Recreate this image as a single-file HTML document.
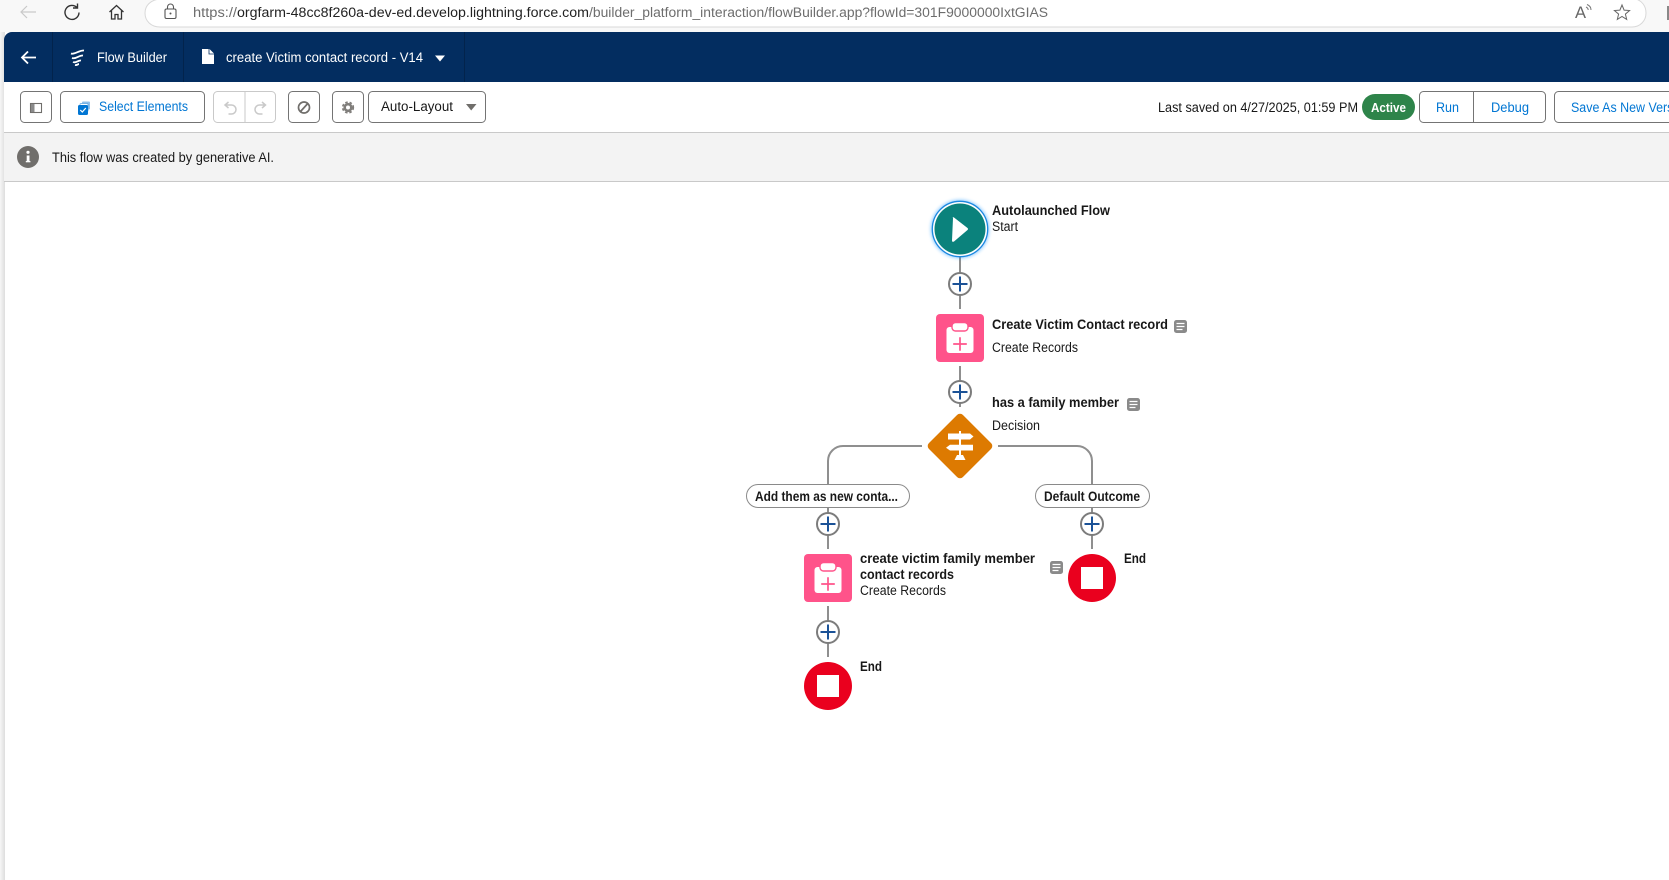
<!DOCTYPE html>
<html lang="en"><head><meta charset="utf-8"><title>Flow Builder</title>
<style>
html,body{margin:0;padding:0;width:1669px;height:880px;overflow:hidden;background:#fff}
svg{display:block}
text{font-family:"Liberation Sans",Arial,sans-serif;font-size:13.5px;fill:#181818}
.b{font-weight:700}
.w{fill:#fff}
.l{fill:#0176d3}
.btn{fill:#fff;stroke:#747474;stroke-width:1}
.c{stroke:#8f8f8f;stroke-width:2;fill:none}
</style></head><body>
<svg width="1669" height="880" viewBox="0 0 1669 880" xmlns="http://www.w3.org/2000/svg">
<defs>
<filter id="gl" x="-30%" y="-30%" width="160%" height="160%"><feGaussianBlur stdDeviation="1.800"/></filter>
<linearGradient id="st" x1="0" x2="1" y1="0" y2="0"><stop offset="0" stop-color="#f6f6f6"/><stop offset="1" stop-color="#dedede"/></linearGradient>
<g id="plus"><circle r="11" fill="#fff" stroke="#7c7c7c" stroke-width="2"/><path d="M-7.500 0H7.500M0-7.500V7.500" stroke="#1b5297" stroke-width="2" fill="none"/></g>
<g id="note"><rect width="13" height="13" rx="2.500" fill="#8a8a8a"/><path d="M2.500 3.500H10.500M2.500 6.500H10.500M2.500 9.500H8.500" stroke="#fff" stroke-width="1.300"/></g>
<g id="rec"><rect x="-24" y="-24" width="48" height="48" rx="4" fill="#ff538a"/>
<rect x="-13.500" y="-11" width="27" height="26" rx="3" fill="#fff"/>
<rect x="-8" y="-15.500" width="16" height="8.500" rx="3.500" fill="#fff" stroke="#ff538a" stroke-width="1.400"/>
<path d="M-6.800 6H6.800M0-0.800V12.800" stroke="#ff538a" stroke-width="1.700" fill="none"/></g>
<g id="end"><circle r="24" fill="#ea001e"/><rect x="-11" y="-11" width="22" height="22" fill="#fff"/></g>
</defs>

<!-- browser chrome -->
<rect width="1669" height="32" fill="#f8f8f8"/>
<path d="M160 -1C150 0 145 6 145 13C145 21 151 27 160 27H1632C1640 27 1646 21 1646 13C1646 6 1642 1 1636 -1Z" fill="#fff" stroke="#d8d8d8" stroke-width="1"/>
<path d="M36 12H21M27 6L21 12L27 18" fill="none" stroke="#c9c9c9" stroke-width="1.200"/>
<path d="M77 7.500A7 7 0 1 0 79 12.500M77.500 3.500V8H73" fill="none" stroke="#333" stroke-width="1.400"/>
<path d="M109.500 12L116.500 5.500L123.500 12M111.500 10.500V19H115V14.500H118V19H121.500V10.500" fill="none" stroke="#333" stroke-width="1.300"/>
<rect x="165" y="9" width="11" height="9.500" rx="1.500" fill="none" stroke="#555" stroke-width="1.100"/>
<path d="M167.500 9V7A3 3 0 0 1 173.500 7V9" fill="none" stroke="#555" stroke-width="1.100"/><circle cx="170.500" cy="13.500" r="1" fill="#555"/>
<text x="193" y="17" style="font-size:13.500px;fill:#6d6d6d" textLength="44" lengthAdjust="spacingAndGlyphs">https://</text>
<text x="237" y="17" style="font-size:13.500px;fill:#222" textLength="352" lengthAdjust="spacingAndGlyphs">orgfarm-48cc8f260a-dev-ed.develop.lightning.force.com</text>
<text x="589" y="17" style="font-size:13.500px;fill:#6d6d6d" textLength="459" lengthAdjust="spacingAndGlyphs">/builder_platform_interaction/flowBuilder.app?flowId=301F9000000IxtGIAS</text>
<text x="1575" y="18" style="font-size:16.500px;fill:#666">A</text>
<path d="M1587 4.500C1589.500 5.500 1591 7.500 1591 10M1586 7C1587.500 7.700 1588.200 8.700 1588.200 10" fill="none" stroke="#777" stroke-width="1"/>
<path d="M1622 5L1624.100 10.100L1629.600 10.500L1625.400 14.100L1626.700 19.400L1622 16.500L1617.300 19.400L1618.600 14.100L1614.400 10.500L1619.900 10.100Z" fill="none" stroke="#666" stroke-width="1"/>
<rect x="1667" y="6" width="2" height="14" fill="#888"/>

<!-- left strip -->
<rect y="32" width="5" height="848" fill="url(#st)"/>

<!-- nav -->
<path d="M4 82V40A8 8 0 0 1 12 32H1669V82Z" fill="#032d60"/>
<path d="M52.500 32V82M183.500 32V82M464.500 32V82" stroke="#02234c" stroke-width="1"/>
<path d="M36 57.500H22M28 51.500L22 57.500L28 63.500" fill="none" stroke="#fff" stroke-width="1.800"/>
<path d="M71 53.500C75 55 79 50 84 50.500M72 58C76 59.500 79 55 83 55.500M73 62C76 63.500 78 60 81 60.500M75 65C77 65.500 78 64 79 64" fill="none" stroke="#fff" stroke-width="1.800"/>
<text class="w" x="97" y="62" textLength="70" lengthAdjust="spacingAndGlyphs">Flow Builder</text>
<path d="M202 49H209.500L214 53.500V64H202Z" fill="#fff"/><path d="M209 49V54H214" fill="none" stroke="#032d60" stroke-width=".8"/>
<text class="w" x="226" y="62" textLength="197" lengthAdjust="spacingAndGlyphs">create Victim contact record - V14</text>
<path d="M435 55.500H445L440 61.500Z" fill="#fff"/>

<!-- toolbar -->
<rect x="4" y="82" width="1665" height="50" fill="#fff"/>
<rect x="4" y="132" width="1665" height="1" fill="#c9c9c9"/>
<rect x="20.500" y="91.500" width="31" height="31" rx="4" class="btn"/>
<rect x="30.500" y="103.500" width="11" height="9" fill="#fff" stroke="#706e6b" stroke-width="1.100"/><rect x="31" y="104" width="3.500" height="8" fill="#8a8a8a"/>
<rect x="60.500" y="91.500" width="144" height="31" rx="4" class="btn"/>
<rect x="82" y="101.500" width="8" height="8" rx="1" fill="#90c0ea"/><rect x="80" y="103.500" width="8" height="8" rx="1" fill="#fff" stroke="#5aa3e0" stroke-width=".7"/>
<rect x="78" y="105" width="10" height="10" rx="1.500" fill="#0176d3"/><path d="M80.300 110L82.300 112L85.800 108" fill="none" stroke="#fff" stroke-width="1.200"/>
<text class="l" x="99" y="111" textLength="89" lengthAdjust="spacingAndGlyphs">Select Elements</text>
<rect x="213.500" y="91.500" width="62" height="31" rx="4" fill="#fff" stroke="#c9c9c9"/><path d="M245 92V122" stroke="#c9c9c9"/>
<path d="M226 105H231.500A4.500 4.500 0 0 1 231.500 114H228.500M228.500 102L225 105L228.500 108" fill="none" stroke="#c9c9c9" stroke-width="1.500"/>
<path d="M265 105H259.500A4.500 4.500 0 0 0 259.500 114H262.500M262 102L265.500 105L262 108" fill="none" stroke="#c9c9c9" stroke-width="1.500"/>
<rect x="288.500" y="91.500" width="31" height="31" rx="4" class="btn"/>
<circle cx="304" cy="107.500" r="5.500" fill="none" stroke="#706e6b" stroke-width="1.700"/><path d="M300.500 111.500L307.800 103.500" stroke="#706e6b" stroke-width="1.700"/>
<rect x="332.500" y="91.500" width="31" height="31" rx="4" class="btn"/>
<circle cx="348" cy="107.500" r="3.300" fill="none" stroke="#807e7b" stroke-width="2.600"/>
<circle cx="348" cy="107.500" r="5.300" fill="none" stroke="#807e7b" stroke-width="1.700" stroke-dasharray="2.500 1.900"/>
<rect x="368.500" y="91.500" width="117" height="31" rx="4" class="btn"/>
<text x="381" y="111" textLength="72" lengthAdjust="spacingAndGlyphs">Auto-Layout</text>
<path d="M466 104H476.500L471.200 110.500Z" fill="#706e6b"/>

<text x="1158" y="112" textLength="200" lengthAdjust="spacingAndGlyphs">Last saved on 4/27/2025, 01:59 PM</text>
<rect x="1362" y="94" width="53" height="26" rx="13" fill="#2e844a"/>
<text class="w b" x="1371" y="112" style="font-size:12.500px" textLength="35" lengthAdjust="spacingAndGlyphs">Active</text>
<rect x="1419.500" y="91.500" width="126" height="31" rx="4" class="btn"/><path d="M1473.500 92V122" stroke="#747474"/>
<text class="l" x="1436" y="112" textLength="23" lengthAdjust="spacingAndGlyphs">Run</text>
<text class="l" x="1491" y="112" textLength="38" lengthAdjust="spacingAndGlyphs">Debug</text>
<rect x="1554.500" y="91.500" width="150" height="31" rx="4" class="btn"/>
<text class="l" x="1571" y="112" textLength="119" lengthAdjust="spacingAndGlyphs">Save As New Version</text>

<!-- banner -->
<rect x="4" y="133" width="1665" height="48" fill="#f3f3f3"/>
<rect x="4" y="181" width="1665" height="1" fill="#c9c9c9"/>
<circle cx="28" cy="157" r="11" fill="#706e6b"/>
<rect x="26.700" y="155.500" width="2.800" height="6.500" fill="#fff"/><rect x="25.800" y="161" width="4.600" height="1.300" fill="#fff"/><circle cx="28" cy="152.300" r="1.600" fill="#fff"/>
<text x="52" y="162" textLength="222" lengthAdjust="spacingAndGlyphs">This flow was created by generative AI.</text>

<!-- connectors -->
<path class="c" d="M960 257V309M960 366V407M922 446H843A15 15 0 0 0 828 461V484M998 446H1077A15 15 0 0 1 1092 461V484M828 508V549M1092 508V549M828 606V657"/>

<!-- start -->
<circle cx="960" cy="229" r="29" fill="#1b96ff" opacity=".55" filter="url(#gl)"/>
<circle cx="960" cy="229" r="27.700" fill="#fff" stroke="#1b88e0" stroke-width="1.300"/>
<circle cx="960" cy="229" r="25.500" fill="#0b827c"/>
<path d="M953 218Q952 216.500 954 217.500L967.500 228Q968.500 229 967.500 230L954 241.500Q952 242.500 952 240.500Z" fill="#fff"/>
<text class="b" x="992" y="215" textLength="118" lengthAdjust="spacingAndGlyphs">Autolaunched Flow</text>
<text x="992" y="231" textLength="26" lengthAdjust="spacingAndGlyphs">Start</text>
<use href="#plus" x="960" y="284"/>

<!-- create record -->
<use href="#rec" x="960" y="338"/>
<text class="b" x="992" y="329" textLength="176" lengthAdjust="spacingAndGlyphs">Create Victim Contact record</text>
<use href="#note" x="1174" y="320"/>
<text x="992" y="352" textLength="86" lengthAdjust="spacingAndGlyphs">Create Records</text>
<use href="#plus" x="960" y="392"/>

<!-- decision -->
<rect x="936" y="422" width="48" height="48" rx="4" fill="#dd7a01" transform="rotate(45 960 446)"/>
<path d="M959 431H961V457H959Z" fill="#fff"/>
<path d="M948 433.500H970L973.500 436.500L970 439.500H948Z" fill="#fff"/>
<path d="M950 444.800H973V450.500H950L946 447.700Z" fill="#fff"/>
<path d="M957 455H963L965.500 460H954.500Z" fill="#fff"/>
<text class="b" x="992" y="407" textLength="127" lengthAdjust="spacingAndGlyphs">has a family member</text>
<use href="#note" x="1127" y="398"/>
<text x="992" y="430" textLength="48" lengthAdjust="spacingAndGlyphs">Decision</text>

<!-- outcomes -->
<rect x="746.500" y="484.500" width="163" height="23" rx="11.500" fill="#fff" stroke="#8a8a8a"/>
<text class="b" x="755" y="501" textLength="143" lengthAdjust="spacingAndGlyphs">Add them as new conta...</text>
<rect x="1035.500" y="484.500" width="114" height="23" rx="11.500" fill="#fff" stroke="#8a8a8a"/>
<text class="b" x="1044" y="501" textLength="96" lengthAdjust="spacingAndGlyphs">Default Outcome</text>
<use href="#plus" x="828" y="524"/>
<use href="#plus" x="1092" y="524"/>

<!-- second record -->
<use href="#rec" x="828" y="578"/>
<text class="b" x="860" y="563" textLength="175" lengthAdjust="spacingAndGlyphs">create victim family member</text>
<text class="b" x="860" y="579" textLength="94" lengthAdjust="spacingAndGlyphs">contact records</text>
<text x="860" y="595" textLength="86" lengthAdjust="spacingAndGlyphs">Create Records</text>
<use href="#note" x="1050" y="561"/>
<use href="#plus" x="828" y="632"/>

<!-- ends -->
<use href="#end" x="1092" y="578"/>
<text class="b" x="1124" y="563" textLength="22" lengthAdjust="spacingAndGlyphs">End</text>
<use href="#end" x="828" y="686"/>
<text class="b" x="860" y="671" textLength="22" lengthAdjust="spacingAndGlyphs">End</text>
</svg>
</body></html>
